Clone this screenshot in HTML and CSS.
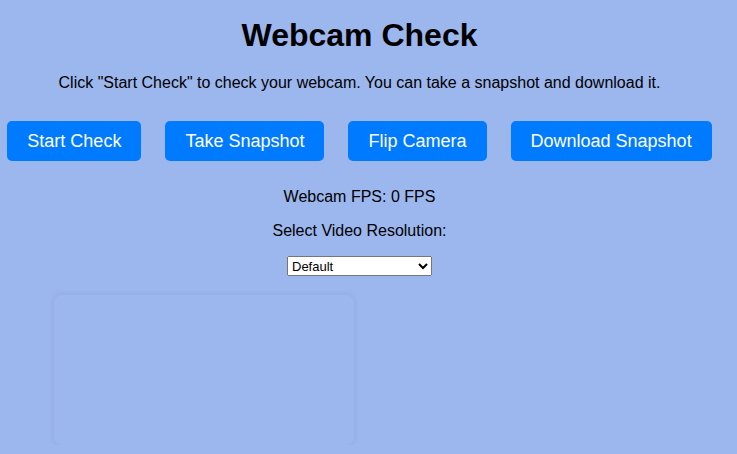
FILE: index.html
```html
<!DOCTYPE html>
<html lang="en">

<head>
    <meta charset="UTF-8">
    <meta name="viewport" content="width=device-width, initial-scale=1.0">
    <title>Webcam Check</title>
    <link rel="stylesheet" href="styles.css">
</head>

<body>
    <div class="page">
        <h1 class="title">Webcam Check</h1>
        <p class="intro">Click "Start Check" to check your webcam. You can take a snapshot and download it.</p>

        <div class="controls">
            <button class="btn">Start Check</button>
            <button class="btn">Take Snapshot</button>
            <button class="btn">Flip Camera</button>
            <button class="btn">Download Snapshot</button>
        </div>

        <p class="fps">Webcam FPS: <span id="fps">0</span> FPS</p>
        <p class="label">Select Video Resolution:</p>
        <select class="resolution">
            <option>Default</option>
            <option>640x480</option>
            <option>1280x720</option>
            <option>1920x1080</option>
        </select>

        <div class="preview">
            <div class="video"></div>
        </div>
    </div>
</body>

</html>
```

FILE: styles.css
```css
body {
    margin: 0;
    background-color: #9cb6ee;
    font-family: "Liberation Sans", Arial, sans-serif;
    color: #000;
    overflow: hidden;
}

.page {
    width: 719px;
    text-align: center;
    padding-top: 17px;
}

.title {
    font-size: 32px;
    margin: 0 0 20px;
}

.intro {
    font-size: 16px;
    margin: 0 0 29px;
}

.controls {
    display: flex;
    justify-content: center;
    gap: 24px;
}

.btn {
    height: 40px;
    padding: 0 20px;
    border: none;
    border-radius: 5px;
    background-color: #007bff;
    color: #fff;
    font-family: inherit;
    font-size: 18px;
    cursor: pointer;
}

.fps {
    font-size: 16px;
    margin: 27px 0 0;
}

.label {
    font-size: 16px;
    margin: 16px 0 0;
}

.resolution {
    margin-top: 16px;
    width: 145px;
    height: 20px;
    font-family: inherit;
    font-size: 13px;
}

.preview {
    text-align: left;
    padding: 19px 0 0 54px;
}

.video {
    width: 300px;
    height: 150px;
    border-radius: 8px;
    box-shadow: 0 0 6px rgba(0, 0, 0, 0.08);
}
```
